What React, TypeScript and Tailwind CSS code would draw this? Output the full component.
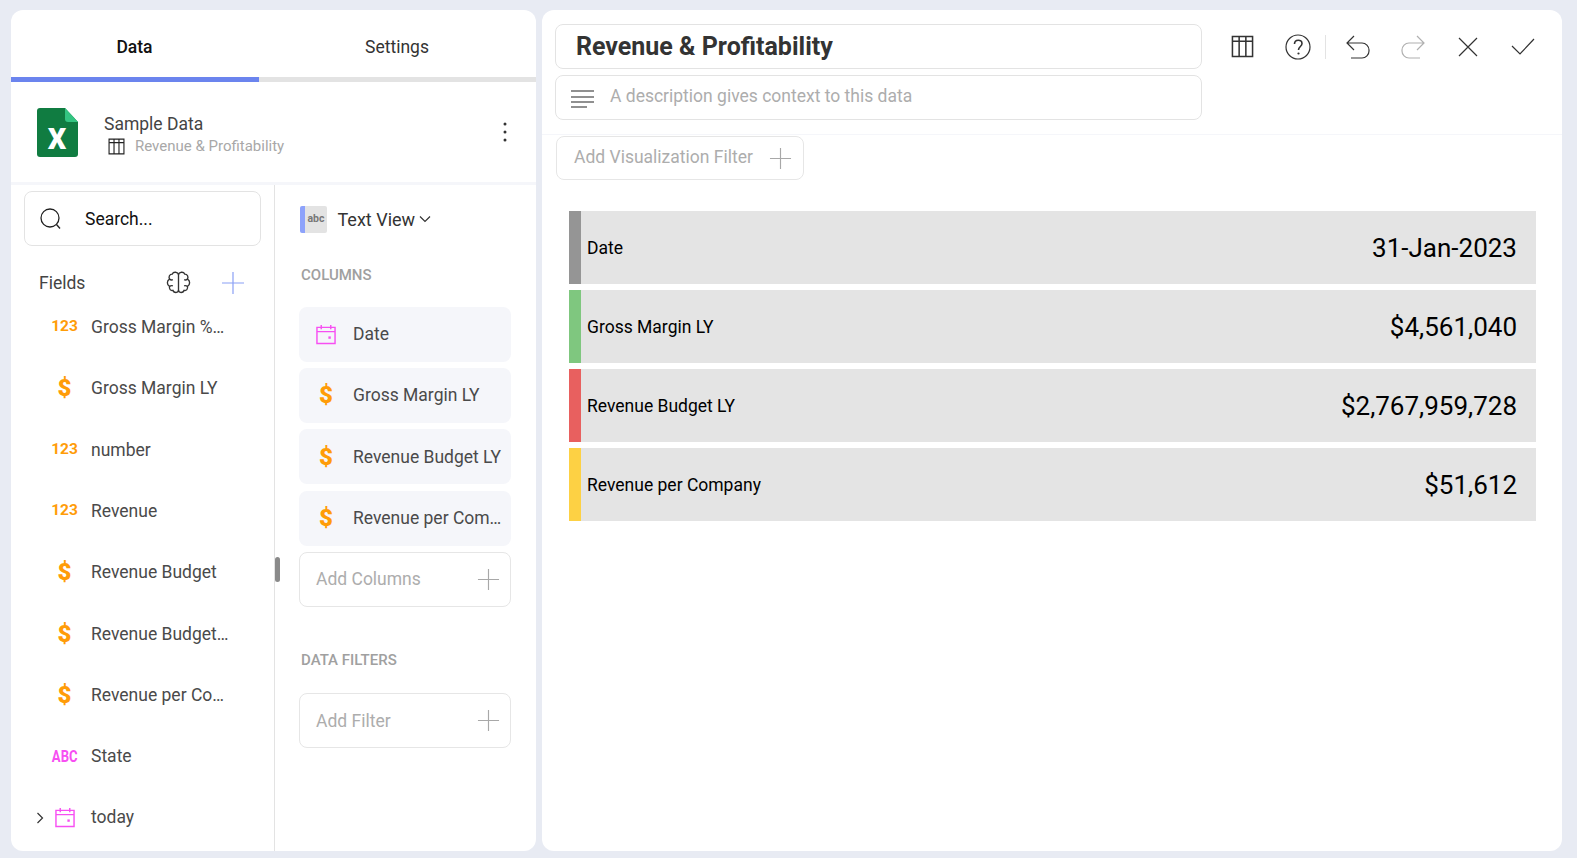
import type { ReactNode } from "react"

const fields = [
  { kind: "num", label: "Gross Margin %…" },
  { kind: "cur", label: "Gross Margin LY" },
  { kind: "num", label: "number" },
  { kind: "num", label: "Revenue" },
  { kind: "cur", label: "Revenue Budget" },
  { kind: "cur", label: "Revenue Budget…" },
  { kind: "cur", label: "Revenue per Co…" },
  { kind: "abc", label: "State" },
  { kind: "date", label: "today" },
]

const columns = [
  { kind: "date", label: "Date" },
  { kind: "cur", label: "Gross Margin LY" },
  { kind: "cur", label: "Revenue Budget LY" },
  { kind: "cur", label: "Revenue per Com…" },
]

const rows = [
  { label: "Date", value: "31-Jan-2023", bar: "bg-[#959595]" },
  { label: "Gross Margin LY", value: "$4,561,040", bar: "bg-[#7fc77f]" },
  { label: "Revenue Budget LY", value: "$2,767,959,728", bar: "bg-[#e8605f]" },
  { label: "Revenue per Company", value: "$51,612", bar: "bg-[#fdd144]" },
]

function Icon({ size, children, className }: { size: number; children: ReactNode; className?: string }) {
  return (
    <svg
      width={size}
      height={size}
      viewBox="0 0 24 24"
      fill="none"
      stroke="currentColor"
      strokeWidth="1.2"
      className={className}
    >
      {children}
    </svg>
  )
}

function TableIcon({ size, className }: { size: number; className?: string }) {
  return (
    <Icon size={size} className={className}>
      <path d="M1.5 1.5h21v21h-21z" strokeWidth="1.6" />
      <path d="M1.5 6.5h21M8.5 1.5v21M15.5 1.5v21" strokeWidth="1.6" />
    </Icon>
  )
}

function PlusIcon({ size, className }: { size: number; className?: string }) {
  return (
    <Icon size={size} className={className}>
      <path d="M12 1v22M1 12h22" />
    </Icon>
  )
}

function CalendarIcon() {
  return (
    <svg width="20" height="21" viewBox="0 0 21 22" fill="none" stroke="#f74ff2" strokeWidth="1.5">
      <path d="M1 3.500h19v17H1zM1 8h19M5.500 1v4.500M15.500 1v4.500" />
      <rect x="13" y="13" width="2.500" height="2.500" fill="#f74ff2" stroke="none" />
    </svg>
  )
}

function TypeIcon({ kind }: { kind: string }) {
  if (kind === "date") return <CalendarIcon />
  if (kind === "cur") return <span className="text-[24px] font-black leading-none text-[#ff9c08]">$</span>
  if (kind === "abc")
    return <span className="scale-x-[0.77] text-[17px] font-bold leading-none text-[#f74ff2]">ABC</span>
  return <span className="text-[15.5px] font-bold leading-none text-[#ff9c08]">123</span>
}

function AddBox({ label, className }: { label: string; className: string }) {
  return (
    <div className={`flex items-center justify-between rounded-lg border border-[#e6e6e6] text-[17.5px] text-[#adadad] ${className}`}>
      <span>{label}</span>
      <PlusIcon size={23} className="text-[#a8a8a8]" />
    </div>
  )
}

function FieldsColumn() {
  return (
    <div className="relative w-[264px] shrink-0 border-r border-[#e3e3e3]">
      <div className="mt-[6px] ml-[13px] flex h-[55px] w-[237px] items-center rounded-lg border border-[#e3e3e3] pl-[14px] text-[17.5px] text-[#111]">
        <svg width="24" height="24" viewBox="0 0 24 24" fill="none" stroke="#222" strokeWidth="1.300">
          <circle cx="11" cy="11" r="9" />
          <path d="M17.500 17.500l3.500 4" />
        </svg>
        <span className="ml-[22px] pt-[2px]">Search...</span>
      </div>
      <div className="mt-[22.500px] flex h-7 items-center pl-[28px]">
        <span className="pt-[2px] text-[17.5px] text-[#444]">Fields</span>
        <svg width="27" height="27" viewBox="0 0 24 24" fill="none" stroke="#333" strokeWidth="1.200" className="ml-[80px]">
          <path d="M12 4.500v16" />
          <path d="M12 5c-.5-2.500-4.500-3-5.500-.5C4 4.500 3 7 4 9c-2.500 1.500-2.500 5 0 6.500-.5 2.500 1 4 3 3.500 1 2.500 4.500 2.500 5 0 .5 2.500 4 2.500 5 0 2 .5 3.500-1 3-3.500 2.500-1.500 2.500-5 0-6.500 1-2 0-4.500-2.500-4.500C16.500 2 12.500 2.500 12 5z" />
          <path d="M4 9c1 .8 2 1 3 .5M4 15.500c1-.8 2-1 3-.5M20 9c-1 .8-2 1-3 .5M20 15.500c-1-.8-2-1-3-.5" />
        </svg>
        <PlusIcon size={24} className="ml-[29px] text-[#8aa0f5]" />
      </div>
      {fields.map((f) => (
        <div key={f.label} className="relative flex h-[61.3px] items-center text-[17.5px] text-[#4a4a4a]">
          {f.kind === "date" && (
            <svg width="8" height="12" viewBox="0 0 8 12" fill="none" stroke="#333" strokeWidth="1.2" className="absolute left-[25px]">
              <path d="M1.500 1l5 5-5 5" />
            </svg>
          )}
          <div className="ml-[37px] flex w-[33px] justify-center">
            <TypeIcon kind={f.kind} />
          </div>
          <span className="ml-[10px] whitespace-nowrap">{f.label}</span>
        </div>
      ))}
      <div className="absolute top-[372px] right-[-6px] h-[25px] w-[5px] rounded-full bg-[#8a8a8a]" />
    </div>
  )
}

function ConfigColumn() {
  return (
    <div className="flex-1 pl-[24px]">
      <div className="mt-[20px] ml-[1px] flex h-7 items-center">
        <div className="flex h-[27px] w-[27px] items-center justify-center rounded-[2px] border-l-[5px] border-[#8da2fb] bg-[#e3e3e3] text-[10.500px] font-bold text-[#777]">
          abc
        </div>
        <span className="ml-[10.500px] text-[18px] text-[#333]">Text View</span>
        <svg width="12" height="8" viewBox="0 0 12 8" fill="none" stroke="#333" strokeWidth="1.2" className="ml-[4px]">
          <path d="M1 1.500l5 5 5-5" />
        </svg>
      </div>
      <div className="mt-[31px] ml-[2px] text-[15px] font-medium text-[#a0a0a0]">COLUMNS</div>
      <div className="mt-[20px] flex w-[212px] flex-col gap-[6.350px]">
        {columns.map((c) => (
          <div key={c.label} className="flex h-[55px] items-center rounded-lg bg-[#f5f6fa] text-[17.5px] text-[#4a4a4a]">
            <div className="flex w-[54px] justify-center">
              <TypeIcon kind={c.kind} />
            </div>
            <span className="whitespace-nowrap">{c.label}</span>
          </div>
        ))}
        <AddBox label="Add Columns" className="h-[55px] pr-[10px] pl-[16px]" />
      </div>
      <div className="mt-[42px] ml-[2px] text-[15px] font-medium text-[#a0a0a0]">DATA FILTERS</div>
      <AddBox label="Add Filter" className="mt-[22px] h-[55px] w-[212px] pr-[10px] pl-[16px]" />
    </div>
  )
}

function LeftPanel() {
  return (
    <div className="flex h-full w-[525px] shrink-0 flex-col overflow-hidden rounded-xl bg-white">
      <div className="flex h-[67px] items-center pt-[8px] text-[17.5px]">
        <div className="w-[247px] text-center font-medium text-[#111]">Data</div>
        <div className="flex-1 text-center text-[#333]">Settings</div>
      </div>
      <div className="flex h-[5px] bg-[#e3e3e3]">
        <div className="w-[248px] bg-[#6b84ee]" />
      </div>
      <div className="flex h-[103px] items-center border-b-[3px] border-[#f5f6fa] pr-[29px] pl-[26px]">
        <svg width="41" height="49" viewBox="0 0 41 49" className="shrink-0">
          <path d="M3 0h25l13 14v32a3 3 0 0 1-3 3H3a3 3 0 0 1-3-3V3a3 3 0 0 1 3-3z" fill="#107c41" />
          <path d="M28 0l13 14H31a3 3 0 0 1-3-3z" fill="#33c481" />
          <text x="20" y="41" textAnchor="middle" fill="#fff" fontSize="29" fontWeight="900" fontFamily="Roboto, sans-serif">X</text>
        </svg>
        <div className="ml-[26px] flex-1 pt-[5px]">
          <div className="text-[17.5px] leading-[22px] text-[#444]">Sample Data</div>
          <div className="mt-[1px] flex items-center pl-[4px] text-[15px] leading-[20px] text-[#a8a8a8]">
            <TableIcon size={17} className="text-[#222]" />
            <span className="ml-[10px]">Revenue &amp; Profitability</span>
          </div>
        </div>
        <svg width="4" height="20" viewBox="0 0 4 20" fill="#333">
          <circle cx="2" cy="2" r="1.500" />
          <circle cx="2" cy="10" r="1.500" />
          <circle cx="2" cy="18" r="1.500" />
        </svg>
      </div>
      <div className="flex min-h-0 flex-1">
        <FieldsColumn />
        <ConfigColumn />
      </div>
    </div>
  )
}

function HeaderActions() {
  return (
    <div className="ml-[13px] flex h-[45px] items-center text-[#333]">
      <div className="flex w-[55px] justify-center">
        <TableIcon size={23} />
      </div>
      <div className="flex w-[55px] justify-center">
        <svg width="26" height="26" viewBox="0 0 26 26" fill="none" stroke="currentColor" strokeWidth="1.2">
          <circle cx="13" cy="13" r="12" />
          <path d="M9.500 10c0-5 7.500-5 7.500-.5 0 3-3.500 3-3.500 6.500" strokeWidth="1.600" />
          <circle cx="13.500" cy="19.500" r="1.100" fill="currentColor" stroke="none" />
        </svg>
      </div>
      <div className="h-6 w-px bg-[#e3e3e3]" />
      <div className="ml-1 flex w-[55px] justify-center">
        <svg width="24" height="24" viewBox="0 0 24 24" fill="none" stroke="currentColor" strokeWidth="1.200">
          <path d="M8 1L1 8l7 7M1 8h15a7 7 0 0 1 7 7v1a7 7 0 0 1-7 7H5" />
        </svg>
      </div>
      <div className="flex w-[55px] justify-center text-[#b0b0b0]">
        <svg width="24" height="24" viewBox="0 0 24 24" fill="none" stroke="currentColor" strokeWidth="1.200">
          <path d="M16 1l7 7-7 7M23 8H8a7 7 0 0 0-7 7v1a7 7 0 0 0 7 7h11" />
        </svg>
      </div>
      <div className="flex w-[55px] justify-center">
        <svg width="20" height="20" viewBox="0 0 20 20" fill="none" stroke="currentColor" strokeWidth="1.200">
          <path d="M1 1l18 18M19 1L1 19" />
        </svg>
      </div>
      <div className="flex w-[55px] justify-center">
        <svg width="24" height="17" viewBox="0 0 24 17" fill="none" stroke="currentColor" strokeWidth="1.200">
          <path d="M1 8l8 8L23 1" />
        </svg>
      </div>
    </div>
  )
}

function RightPanel() {
  return (
    <div className="ml-[6px] h-full w-[1020px] shrink-0 overflow-hidden rounded-xl bg-white">
      <div className="flex h-[125px] items-start border-b border-[#f5f6fa] pt-[14px] pl-[13px]">
        <div className="w-[647px]">
          <div className="flex h-[45px] items-center rounded-lg border border-[#e3e3e3] pt-[1px] pl-[20px] text-[25px] font-bold text-[#333]">
            Revenue &amp; Profitability
          </div>
          <div className="mt-[6px] flex h-[45px] items-center rounded-lg border border-[#e3e3e3] pl-[15px] text-[17.5px] text-[#adadad]">
            <svg width="23" height="20" viewBox="0 0 23 20" fill="none" stroke="#222" strokeWidth="1.200" className="mt-[2px]">
              <path d="M0 2h23M0 8h23M0 13h23M0 18h16" />
            </svg>
            <span className="mb-[2px] ml-[16px]">A description gives context to this data</span>
          </div>
        </div>
        <HeaderActions />
      </div>
      <div className="pl-[14px]">
        <div className="mt-[1px] flex h-[44px] w-[248px] items-center justify-between rounded-lg border border-[#e6e6e6] pr-[11px] pl-[17px] text-[17.5px] text-[#adadad]">
          <span className="mb-[2px]">Add Visualization Filter</span>
          <PlusIcon size={23} className="text-[#a8a8a8]" />
        </div>
      </div>
      <div className="mt-[31px] ml-[27px] grid h-[310px] w-[967px] grid-rows-4 gap-[6px]">
        {rows.map((r) => (
          <div key={r.label} className="flex items-center bg-[#e4e4e4] text-black">
            <div className={`h-full w-3 ${r.bar}`} />
            <span className="ml-[6px] pt-[2px] text-[17.5px]">{r.label}</span>
            <span className="mr-[19px] ml-auto pt-[1px] text-[26px]">{r.value}</span>
          </div>
        ))}
      </div>
    </div>
  )
}

export default function App() {
  return (
    <div className="flex h-[858px] w-[1577px] overflow-hidden bg-[#e8ebf3] pt-[10px] pb-[7px] pl-[11px] font-['Roboto',sans-serif]">
      <LeftPanel />
      <RightPanel />
    </div>
  )
}
